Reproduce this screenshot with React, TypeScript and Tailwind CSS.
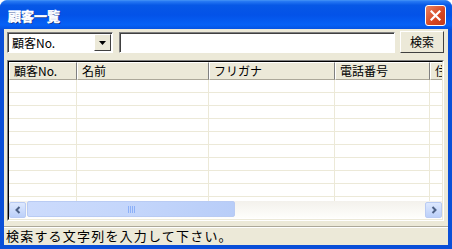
import React from 'react';

const font = { fontFamily: '"Noto Sans CJK JP", "Liberation Sans", sans-serif' };

const columns = [
  { label: '顧客No.', width: 'w-[68px]' },
  { label: '名前', width: 'w-[132px]' },
  { label: 'フリガナ', width: 'w-[126px]' },
  { label: '電話番号', width: 'w-[95px]' },
  { label: '住所', width: 'w-[120px]' },
];

const rows = Array.from({ length: 10 }, (_, i) => i);

function ScrollArrow({ dir }: { dir: 'left' | 'right' }) {
  return (
    <div className="w-[17px] h-[16px] shrink-0 rounded-[2px] border border-[#B9CBF3] bg-[linear-gradient(to_bottom,#DDE8FE,#BCD0F9)] flex items-center justify-center">
      <svg width="8" height="8" viewBox="0 0 8 8">
        {dir === 'left' ? (
          <path d="M5.5 1 L2.5 4 L5.5 7" stroke="#4D6185" strokeWidth="2" fill="none" />
        ) : (
          <path d="M2.5 1 L5.5 4 L2.5 7" stroke="#4D6185" strokeWidth="2" fill="none" />
        )}
      </svg>
    </div>
  );
}

export default function App() {
  return (
    <div className="w-[452px] h-[249px] bg-white overflow-hidden" style={font}>
      <div className="w-full h-full flex flex-col rounded-t-[7px] bg-[#0A4FD8] border-t border-[#3C8CF5]">
        {/* title bar */}
        <div className="h-[28px] shrink-0 flex items-center justify-between pl-[8px] pr-[6px] rounded-t-[7px] bg-[linear-gradient(to_bottom,#2A7CF5_0%,#0758E6_15%,#0352E8_50%,#0661F6_85%,#0553E2_100%)]">
          <span className="text-white font-bold text-[13px] leading-none [-webkit-text-stroke:0.5px_white] [text-shadow:1px_1px_0_#0A2A80]">顧客一覧</span>
          <div className="w-[21px] h-[21px] rounded-[3px] border border-white bg-[linear-gradient(135deg,#E98463,#D64520_60%,#C23B1A)] flex items-center justify-center">
            <svg width="11" height="11" viewBox="0 0 11 11">
              <path d="M1.5 1.5 L9.5 9.5 M9.5 1.5 L1.5 9.5" stroke="white" strokeWidth="2.2" strokeLinecap="square" />
            </svg>
          </div>
        </div>

        {/* body */}
        <div className="flex-1 mx-[4px] mb-[4px] bg-[#ECE9D8] flex flex-col">
          {/* search row */}
          <div className="flex items-center h-[22px] mt-[2px] pl-[3px] pr-[4px]">
            <div className="w-[106px] h-[21px] flex items-center bg-white border-t border-l border-[#808080] border-r border-b border-r-white border-b-white">
              <div className="flex-1 h-full flex items-center border-t border-l border-[#404040] pl-[3px]">
                <span className="text-[12px] leading-none text-black">顧客No.</span>
                <div className="ml-auto mr-[1px] w-[17px] h-[17px] bg-[#ECE9D8] border-t border-l border-white border-r border-b border-r-[#404040] border-b-[#404040] flex items-center justify-center">
                  <svg width="7" height="4" viewBox="0 0 7 4">
                    <path d="M0 0 H7 L3.5 4 Z" fill="black" />
                  </svg>
                </div>
              </div>
            </div>
            <div className="ml-[6px] w-[278px] h-[21px] bg-white border-t border-l border-[#808080] border-r border-b border-r-white border-b-white">
              <div className="h-full border-t border-l border-[#404040]" />
            </div>
            <div className="ml-[5px] w-[44px] h-[22px] bg-[#ECE9D8] border-t border-l border-white border-r border-b border-r-[#404040] border-b-[#404040] flex items-center justify-center">
              <span className="text-[12px] leading-none text-black">検索</span>
            </div>
          </div>

          {/* grid */}
          <div className="mt-[7px] ml-[3px] mr-[4px] h-[161px] border border-[#808080] border-r-white border-b-white">
            <div className="h-full flex flex-col border border-black border-r-[#ECE9D8] border-b-[#ECE9D8] bg-white overflow-hidden">
              <div className="flex h-[18px] shrink-0 overflow-hidden">
                {columns.map((c) => (
                  <div
                    key={c.label}
                    className={`${c.width} shrink-0 h-full bg-[#ECE9D8] border-t border-l border-white border-r border-b border-r-[#808080] border-b-[#ACA899] flex items-center pl-[4px] overflow-hidden`}
                  >
                    <span className="text-[12px] leading-none text-black whitespace-nowrap">{c.label}</span>
                  </div>
                ))}
              </div>
              <div className="flex-1 overflow-hidden">
                {rows.map((r) => (
                  <div key={r} className="flex h-[13px] border-b border-[#ECE9D8]">
                    {columns.map((c) => (
                      <div key={c.label} className={`${c.width} shrink-0 h-full border-r border-[#ECE9D8]`} />
                    ))}
                  </div>
                ))}
              </div>
              {/* horizontal scrollbar */}
              <div className="h-[17px] mb-[1px] shrink-0 flex items-center bg-[linear-gradient(to_bottom,#F3F1EC,#FEFEFB)]">
                <ScrollArrow dir="left" />
                <div className="flex-1 h-full relative">
                  <div className="absolute left-[1px] top-0 w-[208px] h-[16px] rounded-[2px] border border-[#B9CBF3] bg-[linear-gradient(to_right,#CCDBFC,#C4D6FB_50%,#B8CDF8)] flex items-center justify-center">
                    <div className="flex gap-[1px]">
                      {[0, 1, 2, 3].map((i) => (
                        <div key={i} className="w-[1px] h-[7px] bg-[#EEF4FE] border-r border-[#8CB0F8]" />
                      ))}
                    </div>
                  </div>
                </div>
                <ScrollArrow dir="right" />
              </div>
            </div>
          </div>

          {/* status bar */}
          <div className="mt-[5px] flex-1 border-t border-[#ACA899]">
            <div className="h-full border-t border-white flex items-center pl-[2px] pb-[2px]">
              <span className="text-[13px] leading-none tracking-[1.2px] text-black whitespace-nowrap">検索する文字列を入力して下さい。</span>
            </div>
          </div>
        </div>
      </div>
    </div>
  );
}
